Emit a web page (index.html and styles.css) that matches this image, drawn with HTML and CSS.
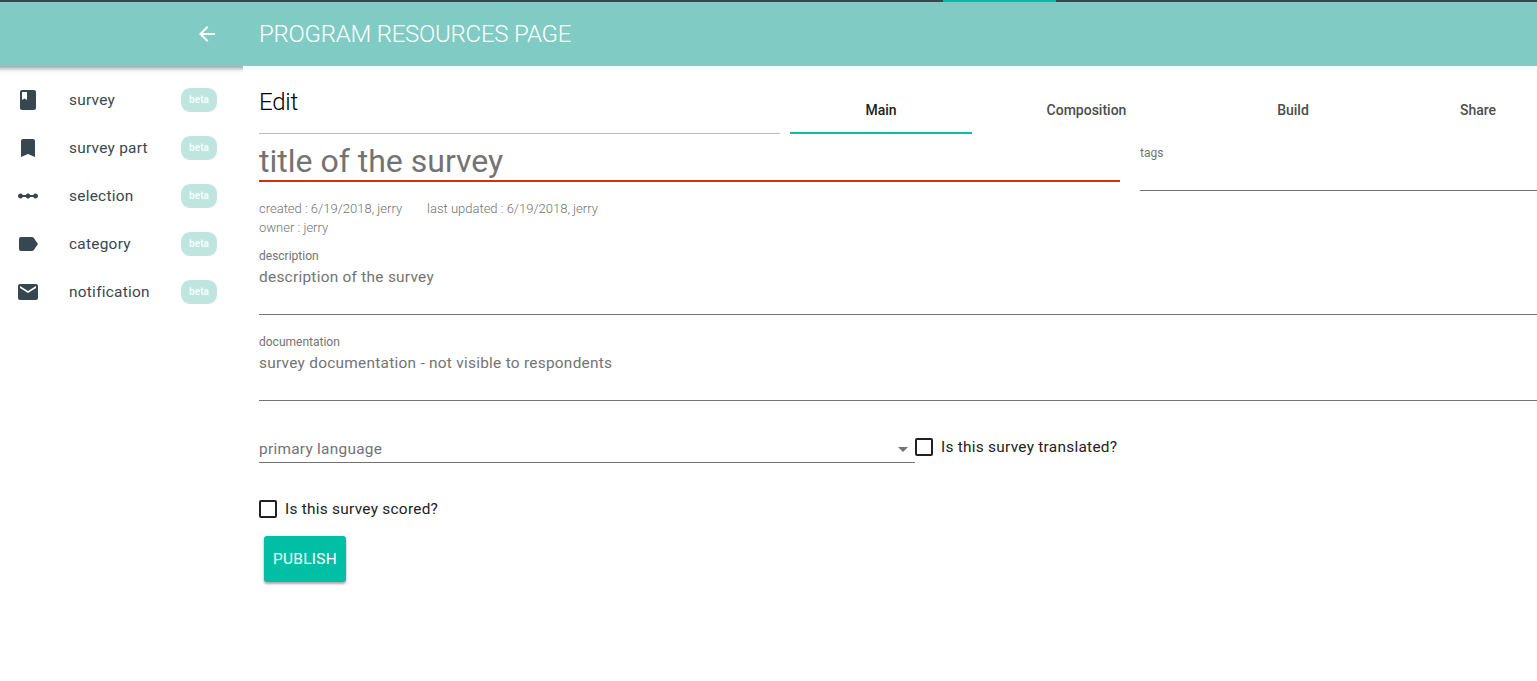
FILE: index.html
```html
<!DOCTYPE html>
<html lang="en">
<head>
<meta charset="utf-8">
<title>Program Resources</title>
<link rel="stylesheet" href="styles.css">
</head>
<body>
<div class="top-strip"><div class="top-strip-active"></div></div>
<div class="layout">
  <aside class="drawer">
    <div class="drawer-bar">
      <svg class="icon" viewBox="0 0 24 24"><path d="M20 11H7.83l5.59-5.59L12 4l-8 8 8 8 1.41-1.41L7.83 13H20v-2z"/></svg>
    </div>
    <nav class="menu">
      <a class="menu-item"><svg class="icon" viewBox="0 0 24 24"><path d="M18 2H6c-1.100 0-2 .9-2 2v16c0 1.100.9 2 2 2h12c1.100 0 2-.9 2-2V4c0-1.100-.9-2-2-2zM6 4h5v8l-2.500-1.500L6 12V4z"/></svg><span class="menu-label">survey</span><span class="badge">beta</span></a>
      <a class="menu-item"><svg class="icon" viewBox="0 0 24 24"><path d="M17 3H7c-1.100 0-1.990.9-1.990 2L5 21l7-3 7 3V5c0-1.100-.9-2-2-2z"/></svg><span class="menu-label">survey part</span><span class="badge">beta</span></a>
      <a class="menu-item"><svg class="icon" viewBox="0 0 24 24"><path d="M19.500 9.500c-1.030 0-1.900.62-2.290 1.500h-2.920c-.39-.88-1.260-1.500-2.290-1.500s-1.900.62-2.290 1.500H6.790c-.39-.88-1.260-1.500-2.290-1.500C3.120 9.500 2 10.620 2 12s1.120 2.500 2.500 2.500c1.030 0 1.900-.62 2.290-1.500h2.920c.39.880 1.260 1.500 2.290 1.500s1.900-.62 2.290-1.500h2.920c.39.880 1.260 1.500 2.290 1.500 1.380 0 2.500-1.120 2.500-2.500s-1.120-2.500-2.500-2.500z"/></svg><span class="menu-label">selection</span><span class="badge">beta</span></a>
      <a class="menu-item"><svg class="icon" viewBox="0 0 24 24"><path d="M17.630 5.840C17.270 5.330 16.670 5 16 5L5 5.010C3.900 5.010 3 5.900 3 7v10c0 1.100.9 1.990 2 1.990L16 19c.67 0 1.270-.33 1.630-.84L22 12l-4.370-6.160z"/></svg><span class="menu-label">category</span><span class="badge">beta</span></a>
      <a class="menu-item"><svg class="icon" viewBox="0 0 24 24"><path d="M20 4H4c-1.100 0-1.990.9-1.990 2L2 18c0 1.100.9 2 2 2h16c1.100 0 2-.9 2-2V6c0-1.100-.9-2-2-2zm0 4l-8 5-8-5V6l8 5 8-5v2z"/></svg><span class="menu-label">notification</span><span class="badge">beta</span></a>
    </nav>
  </aside>
  <main class="page">
    <header class="page-bar">PROGRAM RESOURCES PAGE</header>
    <div class="content">
      <div class="heading-row">
        <h1 class="heading">Edit</h1>
        <div class="tabs">
          <div class="tab tab-main">Main</div>
          <div class="tab tab-composition">Composition</div>
          <div class="tab tab-build">Build</div>
          <div class="tab tab-share">Share</div>
        </div>
      </div>
      <div class="title-row">
        <div class="title-field">title of the survey</div>
        <div class="tags-field">tags</div>
      </div>
      <div class="meta">
        <div class="meta-line"><span>created : 6/19/2018, jerry</span><span>last updated : 6/19/2018, jerry</span></div>
        <div class="meta-line"><span>owner : jerry</span></div>
      </div>
      <div class="area">
        <div class="area-label">description</div>
        <div class="area-text">description of the survey</div>
      </div>
      <div class="area">
        <div class="area-label">documentation</div>
        <div class="area-text">survey documentation - not visible to respondents</div>
      </div>
      <div class="language-row">
        <div class="select"><span>primary language</span><svg class="caret" viewBox="0 0 24 24"><path d="M7 10l5 5 5-5z"/></svg></div>
        <label class="check translated"><span class="box"></span><span>Is this survey translated?</span></label>
      </div>
      <label class="check scored"><span class="box"></span><span>Is this survey scored?</span></label>
      <button class="publish">PUBLISH</button>
    </div>
  </main>
</div>
</body>
</html>
```
FILE: styles.css
```css
* { box-sizing: border-box; }
body {
  margin: 0;
  height: 681px;
  overflow: hidden;
  background: #fff;
  color: #212121;
  font: 15.4px/24px Roboto, sans-serif;
}
.top-strip { height: 2px; padding-left: 943px; background: #37474f; }
.top-strip-active { width: 113px; height: 2px; background: #00bfa5; }
.layout { display: flex; }
.icon { width: 24px; height: 24px; flex: none; fill: currentColor; }

.drawer { width: 243px; flex: none; overflow: hidden; height: 679px; }
.drawer-bar {
  display: flex;
  align-items: center;
  justify-content: flex-end;
  height: 64px;
  margin: 0 -8px;
  padding-right: 32px;
  background: #80cbc4;
  color: #fff;
  box-shadow: 0 2px 5px rgba(0, 0, 0, .45);
}
.menu { padding-top: 10px; }
.menu-item { display: flex; align-items: center; height: 48px; padding: 0 26px 0 16px; color: #37474f; }
.menu-label { flex: 1; margin-left: 29px; letter-spacing: .27px; }
.badge {
  width: 36px;
  height: 24px;
  border-radius: 9px;
  background: #bfe5e1;
  color: #f5fcfb;
  font-size: 10px;
  font-weight: 700;
  text-align: center;
}

.page { flex: 1; min-width: 0; overflow: hidden; }
.page-bar {
  height: 64px;
  padding-left: 16px;
  background: #80cbc4;
  color: #fff;
  font-size: 24px;
  font-weight: 300;
  line-height: 64px;
  letter-spacing: -.24px;
}
.content { width: 1328px; padding-left: 16px; }
.heading-row { display: flex; gap: 10px; height: 68px; }
.heading {
  width: 521px;
  flex: none;
  margin: 0;
  border-bottom: 1px solid #bdbdbd;
  color: #000;
  font-size: 24px;
  font-weight: 300;
  line-height: 72px;
  letter-spacing: -.24px;
}
.tabs { display: flex; padding-top: 20px; }
.tab { height: 48px; color: #4d4d4d; font-size: 14px; font-weight: 500; line-height: 48px; text-align: center; }
.tab-main { width: 182px; border-bottom: 2px solid #00bfa5; color: #212121; }
.tab-composition { width: 229px; }
.tab-build { width: 184px; }
.tab-share { width: 186px; }

.title-row { display: flex; gap: 20px; height: 57px; }
.title-field {
  width: 861px;
  height: 48px;
  border-bottom: 2px solid #dd2c00;
  color: #737373;
  font-size: 32px;
  line-height: 54px;
}
.tags-field { flex: 1; border-bottom: 1px solid #737373; color: #737373; font-size: 12px; line-height: 20px; padding-top: 9px; }
.meta { padding-top: 8px; color: #737373; font-size: 13px; font-weight: 300; line-height: 19px; }
.meta-line { display: flex; gap: 25px; }
.area { height: 70px; margin-bottom: 16px; padding-top: 1px; border-bottom: 1px solid #737373; color: #737373; }
.meta + .area { margin-top: 8px; }
.area-label { font-size: 12px; line-height: 20px; }
.area-text { line-height: 22px; letter-spacing: .27px; }
.language-row { display: flex; height: 46px; margin-top: 16px; }
.select {
  display: flex;
  align-items: flex-start;
  justify-content: space-between;
  width: 656px;
  height: 46px;
  padding-top: 20px;
  border-bottom: 1px solid #737373;
  color: #737373;
  letter-spacing: .27px;
}
.caret { width: 24px; height: 24px; fill: #737373; }
.check { display: flex; align-items: center; gap: 8px; height: 24px; letter-spacing: .27px; }
.box { width: 18px; height: 18px; border: 2px solid #212121; border-radius: 2px; }
.translated { margin-top: 18px; }
.scored { margin-top: 34px; }
.publish {
  display: block;
  width: 82px;
  height: 46px;
  margin: 15px 0 0 5px;
  padding: 0;
  border: 0;
  border-radius: 3px;
  background: #00bfa5;
  color: #fff;
  font: 400 15.4px/46px Roboto, sans-serif;
  letter-spacing: .3px;
  box-shadow: 0 2px 2px rgba(0, 0, 0, .25), 0 1px 4px rgba(0, 0, 0, .15);
}
```
